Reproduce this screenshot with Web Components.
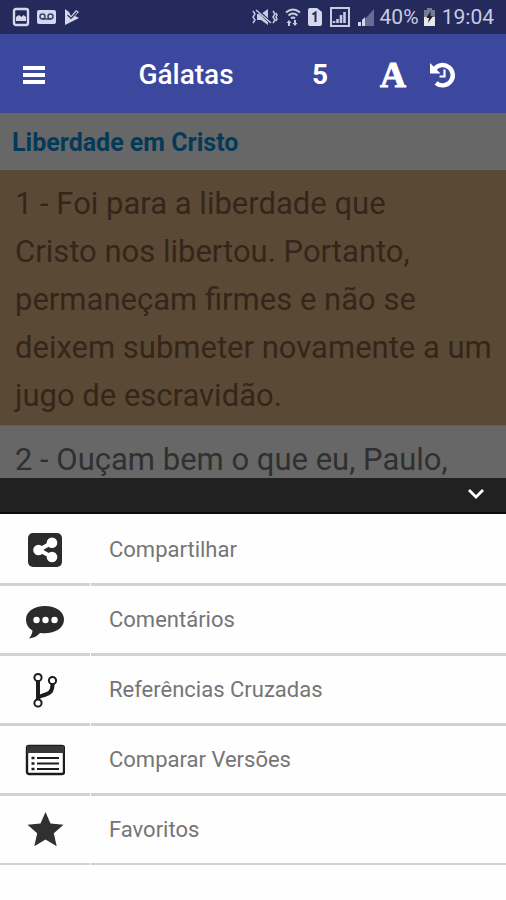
<!DOCTYPE html>
<html lang="pt-BR">
<head>
<meta charset="utf-8">
<meta name="viewport" content="width=device-width, initial-scale=1">
<title>Gálatas 5</title>
<style>
  html, body { margin: 0; }
  body { background: #fefefe; font-family: Roboto, "Liberation Sans", sans-serif; }
</style>
</head>
<body>
<bible-app></bible-app>
<script>
const define = (name, html) => {
  const template = document.createElement('template');
  template.innerHTML = html;
  customElements.define(name, class extends HTMLElement {
    constructor() {
      super();
      this.attachShadow({ mode: 'open' }).append(template.content.cloneNode(true));
    }
  });
};

define('status-bar', `
<style>
  :host { display: flex; align-items: center; justify-content: space-between; height: 34px; flex: none;
    padding: 0 12px 0 12px; background: #242a5c; color: #c9cbe0; font-size: 21px; line-height: 34px; }
  div { display: flex; align-items: center; }
  .left { gap: 7px; }
  .right { gap: 4px; }
  svg { display: block; flex: none; }
</style>
<div class="left">
  <svg width="18" height="20" viewBox="0 0 18 20"><rect x="2" y="2" width="14" height="16" rx="2" fill="none" stroke="#d5d8ea" stroke-width="2.4"/><path d="M4 14v-4l3-2 2.500 2 2-2 2.500 2v4z" fill="#d5d8ea"/></svg>
  <svg width="19" height="14" viewBox="0 0 19 14"><rect width="19" height="14" rx="2" fill="#d5d8ea"/><g fill="none" stroke="#3c4272" stroke-width="1.500"><circle cx="5.500" cy="6.500" r="2.500"/><circle cx="13.500" cy="6.500" r="2.500"/><path d="M5.500 9h8"/></g></svg>
  <svg width="17" height="18" viewBox="0 0 17 18"><path d="M2 1l4 3 2 4 5-6 3 2-4 4 4 2L2 17z" fill="#d5d8ea"/><path d="M4.500 7l3.500 3.500L14 4" fill="none" stroke="#242a5c" stroke-width="1.200"/></svg>
</div>
<div class="right">
  <svg width="27" height="20" viewBox="0 0 27 20"><path d="M6 7h4l7-5v16l-7-5H6z" fill="#c9cbe0"/><path d="M6 3l14 13" stroke="#242a5c" stroke-width="3"/><path d="M5 3l15 13M2 4l2 3-2 3 2 3-2 3M22 4l2 3-2 3 2 3-2 3M25 6l1 2-1 2 1 2-1 2" fill="none" stroke="#c9cbe0" stroke-width="1.500"/></svg>
  <svg width="22" height="20" viewBox="0 0 22 20"><g fill="none" stroke="#c9cbe0" stroke-width="2"><path d="M4 5.500q7-6 14 0M6.500 8.500q4.500-4 9 0M9 11.500q2-2 4 0"/></g><path d="M7 13l2.500 3h-1.500v3H6v-3H4.500zM13 19l-2.500-3H12v-3h2v3h1.500z" fill="#c9cbe0"/></svg>
  <svg width="14" height="18" viewBox="0 0 14 18"><path d="M2 0h7l5 4v12q0 2-2 2H2q-2 0-2-2V2q0-2 2-2z" fill="#d5d8ea"/><path d="M4.500 6.500L7.500 4.500V14" fill="none" stroke="#242a5c" stroke-width="2"/></svg>
  <svg width="27" height="20" viewBox="0 0 27 20"><rect x="5" y="1" width="18" height="18" fill="none" stroke="#c9cbe0" stroke-width="2"/><path d="M8 16v-2M11.500 16v-4M15 16V8M18.500 16V5" stroke="#c9cbe0" stroke-width="2.600"/></svg>
  <svg width="19" height="20" viewBox="0 0 19 20"><path d="M8 12l9-10v17H8z" fill="#686d98"/><path d="M1 19v-4h3v4zM5 19v-6l3-3v9z" fill="#d5d8ea"/></svg>
  <span>40%</span>
  <svg width="13" height="18" viewBox="0 0 13 18"><path d="M4 0h5v2h3v7H1V2h3z" fill="#767b98"/><path d="M1 9h11v9H1z" fill="#e8e8ea"/><path d="M7.500 3L3.500 10H6l-1 5 5-7H7.500z" fill="#20232f"/></svg>
  <span>&#8202;19:04</span>
</div>`);

define('app-bar', `
<style>
  :host { display: grid; grid-template-columns: 68px 1fr 32px 32px 50px 50px; align-items: stretch;
    box-sizing: border-box; height: 79px; flex: none; padding: 2px 38px 0 0; background: #3c489e; color: #fff; }
  button { display: flex; align-items: center; justify-content: center; margin: 0; padding: 0;
    border: 0; background: none; color: inherit; font: 500 28px/40px Roboto, sans-serif; cursor: pointer; }
  .chapter { font-weight: 700; }
  .type { grid-column: 5; font: 700 36px/40px "Liberation Serif", serif; -webkit-text-stroke: 1px #fff; }
  svg { display: block; }
</style>
<button aria-label="Menu"><svg width="22" height="18" viewBox="0 0 22 18"><path d="M0 2h22M0 9h22M0 16h22" stroke="#fff" stroke-width="4"/></svg></button>
<button class="book">Gálatas</button>
<button class="chapter">5</button>
<button class="type" aria-label="Fonte">A</button>
<button aria-label="Histórico"><svg width="28" height="28" viewBox="0 0 28 28"><path d="M5.500 8A10.200 10.200 0 1 1 7 22" fill="none" stroke="#fff" stroke-width="4.400"/><path d="M1 2v10.500h10.500z" fill="#fff"/><path d="M15.500 8.500v7h-5" fill="none" stroke="#fff" stroke-width="2.200"/></svg></button>`);

define('section-title', `
<style>
  :host { display: block; background: #676767; }
  h2 { margin: 0; padding: 15px 12px 12px; color: #043a59; font-size: 25px; line-height: 30px; font-weight: 700; }
</style>
<h2><slot></slot></h2>`);

define('bible-verse', `
<style>
  :host { display: block; padding: 10px 12px 5px 15px; background: #676767; color: #303030;
    border-bottom: 1px solid #5f5f5f; font-size: 31px; line-height: 48px; }
  :host([selected]) { background: #5a4a35; color: #35251a; }
  p { margin: 0; }
</style>
<p><slot></slot></p>`);

define('sheet-handle', `
<style>
  :host { display: flex; justify-content: flex-end; height: 34px; background: #212121; border-bottom: 2px solid #0c0c0c; }
  button { display: flex; align-items: center; justify-content: center; width: 60px; padding: 0 0 2px; border: 0; background: none; cursor: pointer; }
</style>
<button aria-label="Fechar"><svg width="18" height="12" viewBox="0 0 18 12"><path d="M2 2l7 7 7-7" fill="none" stroke="#fff" stroke-width="2.800"/></svg></button>`);

define('menu-item', `
<style>
  :host { display: block; --line: 3px; }
  :host(:last-of-type) { --line: 2px; }
  button { display: grid; grid-template-columns: 90px 1fr; column-gap: 1px; width: 100%; margin: 0; padding: 0;
    border: 0; background: none; color: #757575; font: 400 22px/30px Roboto, sans-serif; text-align: left; cursor: pointer; }
  span { display: flex; align-items: center; height: 67px; border-bottom: var(--line) solid #d2d2d2; }
  .icon { justify-content: center; }
  .label { padding-left: 18px; }
</style>
<button><span class="icon"><slot name="icon"></slot></span><span class="label"><slot></slot></span></button>`);

define('action-sheet', `
<style>
  :host { display: block; flex: none; background: #fefefe; }
  nav { padding: 2px 0 35px; }
  svg { display: block; }
</style>
<sheet-handle></sheet-handle>
<nav>
  <menu-item><svg slot="icon" width="40" height="40" viewBox="0 0 40 40"><rect x="3" y="3" width="34" height="34" rx="5" fill="#2b2b2b"/><path d="M27 12.500L14 20l13 7" fill="none" stroke="#fff" stroke-width="4"/><g fill="#fff"><circle cx="13.500" cy="20" r="5.300"/><circle cx="27" cy="12.800" r="5.300"/><circle cx="27" cy="27" r="5.300"/></g></svg>Compartilhar</menu-item>
  <menu-item><svg slot="icon" width="40" height="40" viewBox="0 0 40 40"><path d="M20 6C9 6 1 11.500 1 19.500c0 5 2.500 8.500 6.500 11C7 34 6 36 4 38.500c5-.5 8.500-2.500 11-5.500 14 1.500 24-4.500 24-13.500C39 11.500 31 6 20 6z" fill="#2b2b2b"/><g fill="#fff"><circle cx="11.500" cy="20" r="3.200"/><circle cx="20.500" cy="20" r="3.200"/><circle cx="29.500" cy="20" r="3.200"/></g></svg>Comentários</menu-item>
  <menu-item><svg slot="icon" width="40" height="40" viewBox="0 0 40 40"><path d="M13 10v20M27.500 14c0 8-3 9.500-8 11-3 1-5.500 1-6.500 3" fill="none" stroke="#1c1c1c" stroke-width="4"/><g fill="#fff" stroke="#1c1c1c" stroke-width="2"><circle cx="13" cy="7.500" r="3.600"/><circle cx="27.500" cy="10.500" r="3.600"/><circle cx="13" cy="33" r="3.600"/></g></svg>Referências Cruzadas</menu-item>
  <menu-item><svg slot="icon" width="40" height="40" viewBox="0 0 40 40"><rect x="2" y="6" width="37" height="28" rx="2" fill="#fff" stroke="#1c1c1c" stroke-width="2.400"/><path d="M2 6h37v7H2z" fill="#383838"/><path d="M12 18h22M12 23.500h22M12 29h22" stroke="#1c1c1c" stroke-width="2.200"/><path d="M6.500 18h3M6.500 23.500h3M6.500 29h3" stroke="#1c1c1c" stroke-width="2.600"/></svg>Comparar Versões</menu-item>
  <menu-item><svg slot="icon" width="40" height="40" viewBox="0 0 40 40"><path d="M20.500 2l5 11.500 13 1.200-9.700 8.600 2.900 12.900-11.200-6.700-11.200 6.700 2.900-12.900L2.500 14.700l13-1.200z" fill="#303030"/></svg>Favoritos</menu-item>
</nav>`);

define('bible-app', `
<style>
  :host { display: flex; flex-direction: column; height: 100vh; overflow: hidden; }
  main { flex: 1 1 0; min-height: 0; overflow: hidden; background: #676767; }
</style>
<status-bar></status-bar>
<app-bar></app-bar>
<main>
  <section-title>Liberdade em Cristo</section-title>
  <bible-verse selected>1 - Foi para a liberdade que<br>Cristo nos libertou. Portanto, permaneçam firmes e não se deixem submeter novamente a um jugo de escravidão.</bible-verse>
  <bible-verse>2 - Ouçam bem o que eu, Paulo,</bible-verse>
</main>
<action-sheet></action-sheet>`);
</script>
</body>
</html>
